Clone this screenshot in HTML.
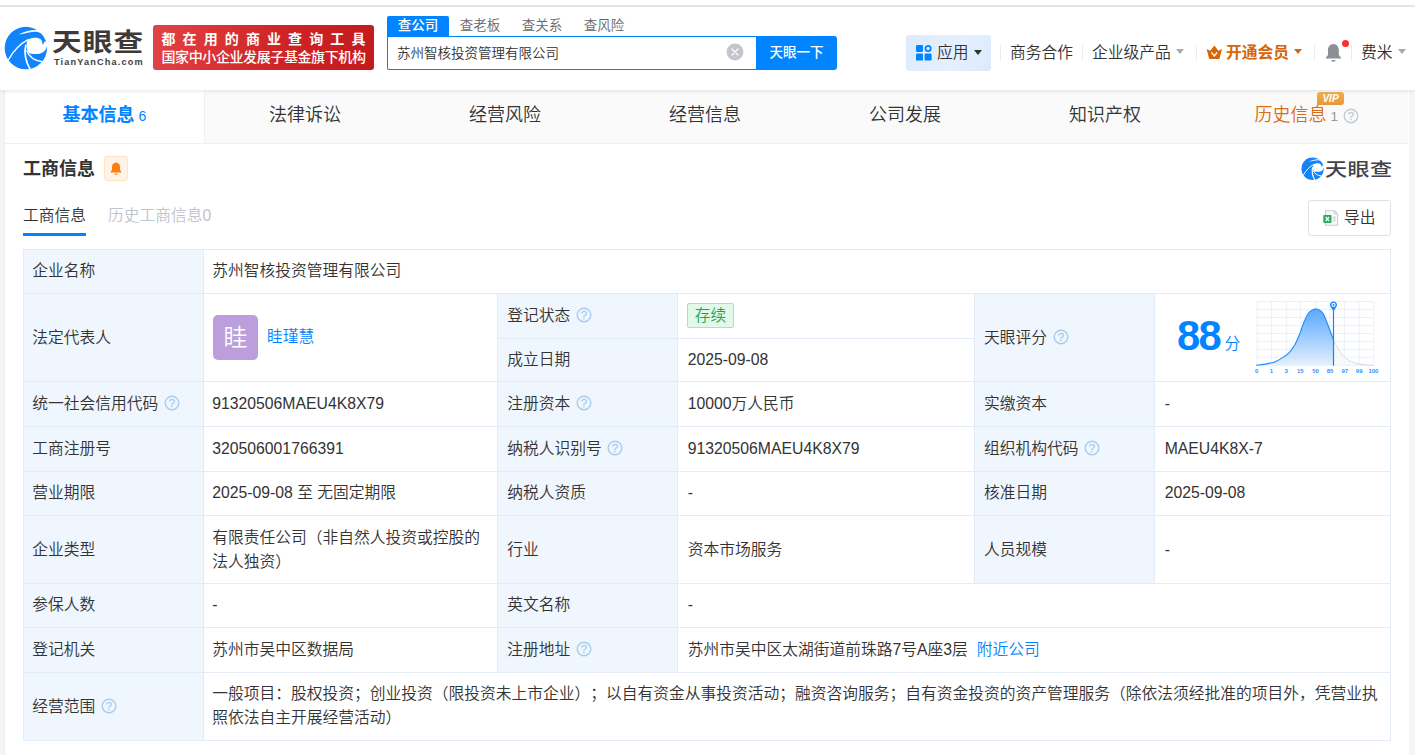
<!DOCTYPE html>
<html lang="zh-CN">
<head>
<meta charset="utf-8">
<title>苏州智核投资管理有限公司 - 天眼查</title>
<style>
*{box-sizing:border-box;margin:0;padding:0}
html,body{width:1415px;height:755px;overflow:hidden}
body{background:#f5f5f5;font-family:"Liberation Sans","Noto Sans CJK SC",sans-serif;color:#333;font-size:15.75px;position:relative;text-spacing-trim:space-all;font-weight:350}
.abs{position:absolute}
#topline{position:absolute;left:0;top:0;width:1415px;height:7px;background:#fff;border-bottom:2px solid #e9e9e9;height:7px}
#header{position:absolute;left:0;top:7px;width:1415px;height:83px;background:#fff;box-shadow:0 1px 4px rgba(0,0,0,.10);z-index:5}
#panel{position:absolute;left:5px;top:90px;width:1404px;height:665px;background:#fff;box-shadow:-1px 0 0 #eeeeee}
#tabs{position:absolute;left:0;top:0;width:1403px;height:54px;display:flex;background:#fafafa;border-bottom:1px solid #f0f0f0}
#tabs .tab{flex:none;width:200px;text-align:center;font-size:18px;line-height:50px;color:#333;white-space:nowrap}
#tabs .tab.on{background:#fff;color:#0084ff;font-weight:bold;border-right:1px solid #f0f0f0}
#tabs .tab .n{font-size:14px;font-weight:350;margin-left:4px}
.c{position:absolute;border:1px solid #e2ebf6;border-right:none;border-bottom:none;background:#fff;display:flex;align-items:center;padding:0 8px 0 8.3px;line-height:23.625px;font-size:15.75px;color:#333}
.c.l{background:#f0f6fd}
.c .t{width:100%}
.q{vertical-align:-2.2px;margin-left:5.5px}
.lk{color:#0084ff}
.av{display:inline-block;margin-left:0.8px;width:45px;height:45px;border-radius:5px;background:#bb9edb;color:#fff;font-size:24px;line-height:45px;text-align:center;vertical-align:middle}
.tag{display:inline-block;height:25px;line-height:23px;width:47px;text-align:center;padding:0;position:relative;top:-0.5px;margin-left:-0.8px;border:1px solid #a3e6b8;background:#e2f8e9;color:#1ea54c;font-size:15.75px;border-radius:2px}
#tb-border{position:absolute;left:23px;top:249px;width:1368px;height:492px;border:1px solid #e2ebf6;pointer-events:none}
</style>
</head>
<body>
<div id="topline"></div>
<div id="header">
  <!-- logo -->
  <svg class="abs" style="left:0;top:13px" width="55" height="55" viewBox="0 0 755 755">
    <circle cx="355" cy="385" r="291" fill="#1184fd"/>
    <path d="M380 268 C440 238 530 235 562 268 C582 290 583 318 586 342 L616 290 L665 310 L642 366 C628 432 565 492 400 455 C368 420 350 350 380 268 Z" fill="#fff"/>
    <path d="M254 203 C330 158 430 130 524 138 L560 160 L610 215 L622 250 L608 232 C585 190 540 165 500 162 C440 158 350 180 254 203 Z" fill="#fff"/>
    <path d="M386 270 C290 320 180 430 114 550" fill="none" stroke="#fff" stroke-width="19"/>
    <path d="M356 340 C328 450 358 580 414 678" fill="none" stroke="#fff" stroke-width="24"/>
    <path d="M366 420 C400 512 480 562 584 574" fill="none" stroke="#fff" stroke-width="20"/>
  </svg>
  <div class="abs" style="left:52.1px;top:19px;font-size:28.5px;line-height:36px;font-weight:700;color:#3e3a39;letter-spacing:1.02px;white-space:nowrap;transform-origin:0 0;transform:scale(1.04,0.882)">天眼查</div>
  <div class="abs" style="left:54px;top:49.3px;font-size:9.2px;line-height:12px;font-weight:bold;color:#45413f;letter-spacing:1.13px;white-space:nowrap">TianYanCha.com</div>
  <!-- banner -->
  <div class="abs" style="left:153px;top:18px;width:221px;height:45px;border-radius:3px;background:linear-gradient(100deg,#e24344 0%,#d02526 55%,#c51a1b 100%);color:#fff;font-weight:bold;white-space:nowrap">
    <div class="abs" style="left:8.5px;top:4px;font-size:14px;line-height:20px;letter-spacing:7.1px">都在用的商业查询工具</div>
    <div class="abs" style="left:8.5px;top:22px;font-size:14px;line-height:20px;letter-spacing:-0.4px;font-weight:500">国家中小企业发展子基金旗下机构</div>
  </div>
  <!-- search -->
  <div class="abs" style="left:387px;top:9px;width:62px;height:21px;background:#0084ff;color:#fff;font-size:13.5px;font-weight:500;line-height:19px;text-align:center;border-radius:2px 2px 0 0">查公司</div>
  <div class="abs" style="left:449px;top:9px;width:62px;height:20px;color:#666;font-size:13.5px;line-height:19px;text-align:center">查老板</div>
  <div class="abs" style="left:511px;top:9px;width:62px;height:20px;color:#666;font-size:13.5px;line-height:19px;text-align:center">查关系</div>
  <div class="abs" style="left:573px;top:9px;width:62px;height:20px;color:#666;font-size:13.5px;line-height:19px;text-align:center">查风险</div>
  <div class="abs" style="left:387px;top:29px;width:370px;height:34px;border:1px solid #0084ff;border-right:none;border-radius:2px 0 0 2px;background:#fff;font-size:13.5px;line-height:34px;padding-left:9px;color:#333">苏州智核投资管理有限公司</div>
  <svg class="abs" style="left:726px;top:36px" width="18" height="18" viewBox="0 0 18 18"><circle cx="9" cy="9" r="8.4" fill="#c4c6cc"/><path d="M6 6 L12 12 M12 6 L6 12" stroke="#fff" stroke-width="1.3" stroke-linecap="round"/></svg>
  <div class="abs" style="left:756px;top:29px;width:81px;height:34px;background:#0084ff;color:#fff;font-size:13.5px;font-weight:500;line-height:33px;text-align:center;border-radius:0 3px 3px 0">天眼一下</div>
  <!-- nav -->
  <div class="abs" style="left:906px;top:28px;width:85px;height:36px;border-radius:3px;background:linear-gradient(120deg,#deebfd,#e4f0fe 60%,#dbe9fc)"></div>
  <svg class="abs" style="left:916px;top:38px" width="16" height="16" viewBox="0 0 16 16"><rect x="0" y="0" width="7" height="7" rx="1.2" fill="#0084ff"/><rect x="0" y="8.6" width="7" height="7" rx="1.2" fill="#0084ff"/><rect x="8.6" y="8.6" width="7" height="7" rx="1.2" fill="#0084ff"/><circle cx="12.1" cy="3.5" r="2.6" fill="none" stroke="#0084ff" stroke-width="1.8"/></svg>
  <div class="abs" style="left:937px;top:34px;font-size:15.75px;line-height:24px;color:#333;white-space:nowrap">应用</div>
  <div class="abs tri" style="left:974px;top:43.3px;border:4px solid transparent;border-top:5px solid #333;border-bottom:none"></div>
  <div class="abs" style="left:1000px;top:38px;width:1px;height:15px;background:#ebebeb"></div>
  <div class="abs" style="left:1010px;top:34px;font-size:15.75px;line-height:24px;color:#333;white-space:nowrap">商务合作</div>
  <div class="abs" style="left:1082px;top:38px;width:1px;height:15px;background:#ebebeb"></div>
  <div class="abs" style="left:1092px;top:34px;font-size:15.75px;line-height:24px;color:#333;white-space:nowrap">企业级产品</div>
  <div class="abs tri" style="left:1176.4px;top:42.3px;border:4px solid transparent;border-top:5px solid #aaa;border-bottom:none"></div>
  <div class="abs" style="left:1196px;top:38px;width:1px;height:15px;background:#ebebeb"></div>
  <svg class="abs" style="left:1205.8px;top:38.2px" width="16.6" height="14.4" viewBox="0 0 18 16"><path d="M0.5 4.5 L4.5 6.5 L9 0.5 L13.5 6.5 L17.5 4.5 L15 14.5 Q14.8 15.5 13.8 15.5 L4.2 15.5 Q3.2 15.5 3 14.5 Z" fill="#d4660c"/><path d="M5.8 8.2 L9 12.2 L12.2 8.2" fill="none" stroke="#fff" stroke-width="1.6"/></svg>
  <div class="abs" style="left:1226px;top:34px;font-size:15.75px;line-height:24px;color:#d4660c;font-weight:bold;white-space:nowrap">开通会员</div>
  <div class="abs tri" style="left:1294.4px;top:42.3px;border:4px solid transparent;border-top:5px solid #d4660c;border-bottom:none"></div>
  <div class="abs" style="left:1314px;top:38px;width:1px;height:15px;background:#ebebeb"></div>
  <svg class="abs" style="left:1325.3px;top:36px" width="16.8" height="20" viewBox="0 0 18 20" preserveAspectRatio="none"><path d="M9 1 C5 1 3.2 4.2 3.2 7.5 L3.2 12 L1 14.6 L1 15.4 L17 15.4 L17 14.6 L14.8 12 L14.8 7.5 C14.8 4.2 13 1 9 1 Z" fill="#8c8f96"/><rect x="6.8" y="17" width="4.4" height="1.4" rx="0.7" fill="#8c8f96"/></svg>
  <div class="abs" style="left:1342px;top:33px;width:7px;height:7px;border-radius:50%;background:#ff2d2d"></div>
  <div class="abs" style="left:1351px;top:38px;width:1px;height:15px;background:#ebebeb"></div>
  <div class="abs" style="left:1361px;top:34px;font-size:15.75px;line-height:24px;color:#333;white-space:nowrap">费米</div>
  <div class="abs tri" style="left:1398px;top:41.8px;border:4px solid transparent;border-top:5px solid #aaa;border-bottom:none"></div>
</div>

<div id="panel">
  <div id="tabs">
    <div class="tab on">基本信息<span class="n">6</span></div>
    <div class="tab">法律诉讼</div>
    <div class="tab">经营风险</div>
    <div class="tab">经营信息</div>
    <div class="tab">公司发展</div>
    <div class="tab">知识产权</div>
    <div class="tab" style="color:#dd6b10;position:relative;padding-left:3px;text-align:left"><span style="margin-left:46.5px">历史信息</span><span class="n" style="color:#999;font-size:13.5px;margin-left:4px">1</span><svg style="vertical-align:-2.5px;margin-left:4.5px" viewBox="0 0 16 16" width="16" height="16"><circle cx="8" cy="8" r="6.8" fill="none" stroke="#c1cad6" stroke-width="1.4"/><text x="8" y="12" text-anchor="middle" font-size="11.5" font-family="Liberation Sans, sans-serif" fill="#c1cad6" stroke="#c1cad6" stroke-width="0.3">?</text></svg>
      <span class="abs" style="left:112px;top:2px;width:27px;height:13px;background:linear-gradient(180deg,#f0b050,#e8963a);border-radius:3px 3px 3px 0;color:#fff;font-size:10px;line-height:13px;font-weight:bold;font-style:italic;text-align:center">VIP</span>
      <span class="abs" style="left:112px;top:14px;width:0;height:0;border-left:3px solid #e8963a;border-bottom:3px solid transparent"></span>
    </div>
  </div>
</div>

<!-- section title (page coords) -->
<div class="abs" style="left:23px;top:156px;font-size:18px;line-height:26px;font-weight:bold;color:#333;white-space:nowrap">工商信息</div>
<div class="abs" style="left:104px;top:156px;width:24px;height:25px;border:1px solid #ffe3c4;background:#fff4e8;border-radius:3px"></div>
<svg class="abs" style="left:110px;top:161.5px" width="12" height="14" viewBox="0 0 12 14"><path d="M6 0.5 C3.3 0.5 2 2.8 2 5 L2 8 L0.6 9.8 L0.6 10.6 L11.4 10.6 L11.4 9.8 L10 8 L10 5 C10 2.8 8.7 0.5 6 0.5 Z" fill="#ff7d0a"/><rect x="4.6" y="11.6" width="2.8" height="1.2" rx="0.6" fill="#ff7d0a"/></svg>

<!-- watermark logo right -->
<svg class="abs" style="left:1298.70px;top:153.55px" width="28.93" height="28.93" viewBox="0 0 755 755">
    <circle cx="355" cy="385" r="291" fill="#1184fd"/>
    <path d="M380 268 C440 238 530 235 562 268 C582 290 583 318 586 342 L616 290 L665 310 L642 366 C628 432 565 492 400 455 C368 420 350 350 380 268 Z" fill="#fff"/>
    <path d="M254 203 C330 158 430 130 524 138 L560 160 L610 215 L622 250 L608 232 C585 190 540 165 500 162 C440 158 350 180 254 203 Z" fill="#fff"/>
    <path d="M386 270 C290 320 180 430 114 550" fill="none" stroke="#fff" stroke-width="24"/>
    <path d="M356 340 C328 450 358 580 414 678" fill="none" stroke="#fff" stroke-width="30"/>
    <path d="M366 420 C400 512 480 562 584 574" fill="none" stroke="#fff" stroke-width="26"/>
</svg>
<div class="abs" style="left:1324.7px;top:157.7px;font-size:20.5px;line-height:28px;font-weight:500;color:#434349;letter-spacing:0.3px;white-space:nowrap;transform-origin:0 0;transform:scale(1.08,0.866)">天眼查</div>

<!-- sub tabs -->
<div class="abs" style="left:23px;top:204px;font-size:15.75px;line-height:24px;color:#333;white-space:nowrap">工商信息</div>
<div class="abs" style="left:23px;top:233px;width:63px;height:3px;background:#0084ff"></div>
<div class="abs" style="left:108px;top:204px;font-size:15.75px;line-height:24px;color:#c0c4cc;white-space:nowrap">历史工商信息0</div>

<!-- export -->
<div class="abs" style="left:1308px;top:200px;width:83px;height:36px;border:1px solid #dde2ea;border-radius:3px;background:#fff"></div>
<svg class="abs" style="left:1322.5px;top:210px" width="16" height="16" viewBox="0 0 16 16"><path d="M2.600 0.800 L11.600 0.800 L14.600 3.800 L14.600 15.200 L2.600 15.200 Z" fill="#fafafb" stroke="#c9ccd4" stroke-width="1.1" stroke-linejoin="round"/><path d="M11.300 1 L11.300 4 L14.400 4" fill="none" stroke="#c9ccd4" stroke-width="0.9"/><path d="M10 7.200 H12.800 M10 9 H12.800 M10 10.800 H12.800" stroke="#c4c7cf" stroke-width="0.9"/><rect x="0.300" y="5" width="8.200" height="8" rx="0.8" fill="#27ae60"/><path d="M2.700 7 L6.100 11 M6.100 7 L2.700 11" stroke="#fff" stroke-width="1.2"/></svg>
<div class="abs" style="left:1344px;top:206px;font-size:15.75px;line-height:24px;color:#333;white-space:nowrap">导出</div>

<!-- table -->
<div class="c l" style="left:23px;top:249px;width:180px;height:44px;padding-bottom:2px;padding-left:8.3px;"><div class="t">企业名称</div></div>
<div class="c" style="left:203px;top:249px;width:1188px;height:44px;padding-bottom:2px;padding-left:8.3px;"><div class="t">苏州智核投资管理有限公司</div></div>
<div class="c l" style="left:23px;top:293px;width:180px;height:88px;padding-left:8.3px;"><div class="t">法定代表人</div></div>
<div class="c" style="left:203px;top:293px;width:294px;height:88px;padding-left:8.3px;"><div class="t"><span class="av">眭</span><span class="lk" style="margin-left:9px">眭瑾慧</span></div></div>
<div class="c l" style="left:497px;top:293px;width:180px;height:45px;padding-left:9.3px;"><div class="t">登记状态<svg class="q" viewBox="0 0 16 16" width="16" height="16"><circle cx="8" cy="8" r="6.8" fill="none" stroke="#a9cdef" stroke-width="1.4"/><text x="8" y="12" text-anchor="middle" font-size="11.5" font-family="Liberation Sans, sans-serif" fill="#a9cdef" stroke="#a9cdef" stroke-width="0.3">?</text></svg></div></div>
<div class="c" style="left:677px;top:293px;width:297px;height:45px;padding-left:9.8px;"><div class="t"><span class="tag">存续</span></div></div>
<div class="c l" style="left:497px;top:338px;width:180px;height:43px;padding-left:9.3px;"><div class="t">成立日期</div></div>
<div class="c" style="left:677px;top:338px;width:297px;height:43px;padding-left:9.8px;"><div class="t">2025-09-08</div></div>
<div class="c l" style="left:974px;top:293px;width:180px;height:88px;padding-left:9.1px;"><div class="t">天眼评分<svg class="q" viewBox="0 0 16 16" width="16" height="16"><circle cx="8" cy="8" r="6.8" fill="none" stroke="#a9cdef" stroke-width="1.4"/><text x="8" y="12" text-anchor="middle" font-size="11.5" font-family="Liberation Sans, sans-serif" fill="#a9cdef" stroke="#a9cdef" stroke-width="0.3">?</text></svg></div></div>
<div class="c" style="left:1154px;top:293px;width:237px;height:88px;padding-left:9.7px;"><div class="t"></div></div>
<div class="c l" style="left:23px;top:381px;width:180px;height:45px;padding-left:8.3px;"><div class="t">统一社会信用代码<svg class="q" viewBox="0 0 16 16" width="16" height="16"><circle cx="8" cy="8" r="6.8" fill="none" stroke="#a9cdef" stroke-width="1.4"/><text x="8" y="12" text-anchor="middle" font-size="11.5" font-family="Liberation Sans, sans-serif" fill="#a9cdef" stroke="#a9cdef" stroke-width="0.3">?</text></svg></div></div>
<div class="c" style="left:203px;top:381px;width:294px;height:45px;padding-left:8.3px;"><div class="t">91320506MAEU4K8X79</div></div>
<div class="c l" style="left:497px;top:381px;width:180px;height:45px;padding-left:9.3px;"><div class="t">注册资本<svg class="q" viewBox="0 0 16 16" width="16" height="16"><circle cx="8" cy="8" r="6.8" fill="none" stroke="#a9cdef" stroke-width="1.4"/><text x="8" y="12" text-anchor="middle" font-size="11.5" font-family="Liberation Sans, sans-serif" fill="#a9cdef" stroke="#a9cdef" stroke-width="0.3">?</text></svg></div></div>
<div class="c" style="left:677px;top:381px;width:297px;height:45px;padding-left:9.8px;"><div class="t">10000万人民币</div></div>
<div class="c l" style="left:974px;top:381px;width:180px;height:45px;padding-left:9.1px;"><div class="t">实缴资本</div></div>
<div class="c" style="left:1154px;top:381px;width:237px;height:45px;padding-left:9.7px;"><div class="t">-</div></div>
<div class="c l" style="left:23px;top:426px;width:180px;height:45px;padding-left:8.3px;"><div class="t">工商注册号</div></div>
<div class="c" style="left:203px;top:426px;width:294px;height:45px;padding-left:8.3px;"><div class="t">320506001766391</div></div>
<div class="c l" style="left:497px;top:426px;width:180px;height:45px;padding-left:9.3px;"><div class="t">纳税人识别号<svg class="q" viewBox="0 0 16 16" width="16" height="16"><circle cx="8" cy="8" r="6.8" fill="none" stroke="#a9cdef" stroke-width="1.4"/><text x="8" y="12" text-anchor="middle" font-size="11.5" font-family="Liberation Sans, sans-serif" fill="#a9cdef" stroke="#a9cdef" stroke-width="0.3">?</text></svg></div></div>
<div class="c" style="left:677px;top:426px;width:297px;height:45px;padding-left:9.8px;"><div class="t">91320506MAEU4K8X79</div></div>
<div class="c l" style="left:974px;top:426px;width:180px;height:45px;padding-left:9.1px;"><div class="t">组织机构代码<svg class="q" viewBox="0 0 16 16" width="16" height="16"><circle cx="8" cy="8" r="6.8" fill="none" stroke="#a9cdef" stroke-width="1.4"/><text x="8" y="12" text-anchor="middle" font-size="11.5" font-family="Liberation Sans, sans-serif" fill="#a9cdef" stroke="#a9cdef" stroke-width="0.3">?</text></svg></div></div>
<div class="c" style="left:1154px;top:426px;width:237px;height:45px;padding-left:9.7px;"><div class="t">MAEU4K8X-7</div></div>
<div class="c l" style="left:23px;top:471px;width:180px;height:44px;padding-bottom:2px;padding-left:8.3px;"><div class="t">营业期限</div></div>
<div class="c" style="left:203px;top:471px;width:294px;height:44px;padding-bottom:2px;padding-left:8.3px;"><div class="t">2025-09-08 至 无固定期限</div></div>
<div class="c l" style="left:497px;top:471px;width:180px;height:44px;padding-bottom:2px;padding-left:9.3px;"><div class="t">纳税人资质</div></div>
<div class="c" style="left:677px;top:471px;width:297px;height:44px;padding-bottom:2px;padding-left:9.8px;"><div class="t">-</div></div>
<div class="c l" style="left:974px;top:471px;width:180px;height:44px;padding-bottom:2px;padding-left:9.1px;"><div class="t">核准日期</div></div>
<div class="c" style="left:1154px;top:471px;width:237px;height:44px;padding-bottom:2px;padding-left:9.7px;"><div class="t">2025-09-08</div></div>
<div class="c l" style="left:23px;top:515px;width:180px;height:68px;padding-left:8.3px;"><div class="t">企业类型</div></div>
<div class="c" style="left:203px;top:515px;width:294px;height:68px;padding-left:8.3px;"><div class="t">有限责任公司（非自然人投资或控股的法人独资）</div></div>
<div class="c l" style="left:497px;top:515px;width:180px;height:68px;padding-left:9.3px;"><div class="t">行业</div></div>
<div class="c" style="left:677px;top:515px;width:297px;height:68px;padding-left:9.8px;"><div class="t">资本市场服务</div></div>
<div class="c l" style="left:974px;top:515px;width:180px;height:68px;padding-left:9.1px;"><div class="t">人员规模</div></div>
<div class="c" style="left:1154px;top:515px;width:237px;height:68px;padding-left:9.7px;"><div class="t">-</div></div>
<div class="c l" style="left:23px;top:583px;width:180px;height:44px;padding-bottom:2px;padding-left:8.3px;"><div class="t">参保人数</div></div>
<div class="c" style="left:203px;top:583px;width:294px;height:44px;padding-bottom:2px;padding-left:8.3px;"><div class="t">-</div></div>
<div class="c l" style="left:497px;top:583px;width:180px;height:44px;padding-bottom:2px;padding-left:9.3px;"><div class="t">英文名称</div></div>
<div class="c" style="left:677px;top:583px;width:714px;height:44px;padding-bottom:2px;padding-left:9.8px;"><div class="t">-</div></div>
<div class="c l" style="left:23px;top:627px;width:180px;height:45px;padding-left:8.3px;"><div class="t">登记机关</div></div>
<div class="c" style="left:203px;top:627px;width:294px;height:45px;padding-left:8.3px;"><div class="t">苏州市吴中区数据局</div></div>
<div class="c l" style="left:497px;top:627px;width:180px;height:45px;padding-left:9.3px;"><div class="t">注册地址<svg class="q" viewBox="0 0 16 16" width="16" height="16"><circle cx="8" cy="8" r="6.8" fill="none" stroke="#a9cdef" stroke-width="1.4"/><text x="8" y="12" text-anchor="middle" font-size="11.5" font-family="Liberation Sans, sans-serif" fill="#a9cdef" stroke="#a9cdef" stroke-width="0.3">?</text></svg></div></div>
<div class="c" style="left:677px;top:627px;width:714px;height:45px;padding-left:9.8px;"><div class="t">苏州市吴中区太湖街道前珠路7号A座3层<span class="lk" style="margin-left:9px">附近公司</span></div></div>
<div class="c l" style="left:23px;top:672px;width:180px;height:69px;padding-left:8.3px;"><div class="t">经营范围<svg class="q" viewBox="0 0 16 16" width="16" height="16"><circle cx="8" cy="8" r="6.8" fill="none" stroke="#a9cdef" stroke-width="1.4"/><text x="8" y="12" text-anchor="middle" font-size="11.5" font-family="Liberation Sans, sans-serif" fill="#a9cdef" stroke="#a9cdef" stroke-width="0.3">?</text></svg></div></div>
<div class="c" style="left:203px;top:672px;width:1188px;height:69px;padding-bottom:2px;padding-left:8.3px;"><div class="t">一般项目：股权投资；创业投资（限投资未上市企业）；以自有资金从事投资活动；融资咨询服务；自有资金投资的资产管理服务（除依法须经批准的项目外，凭营业执照依法自主开展经营活动）</div></div>
<div id="tb-border"></div>
<span style="position:absolute;left:1177px;top:310.5px;font-size:41.7px;line-height:50px;font-weight:bold;color:#0084ff;letter-spacing:-1.6px;white-space:nowrap">88</span>
<span style="position:absolute;left:1224.500px;top:332px;font-size:15.75px;line-height:24px;color:#0084ff">分</span>
<svg style="position:absolute;left:1250px;top:295px" width="140" height="85" viewBox="0 0 140 85">
<defs><linearGradient id="g1" x1="0" y1="0" x2="0" y2="1"><stop offset="0" stop-color="#4da3ff"/><stop offset="0.45" stop-color="#8ec4ff"/><stop offset="1" stop-color="#e3effc"/></linearGradient></defs>
<path d="M6.98 6.53V70.34M21.38 6.53V70.34M36.35 6.53V70.34M50.64 6.53V70.34M65.61 6.53V70.34M79.90 6.53V70.34M94.31 6.53V70.34M109.16 6.53V70.34M123.79 6.53V70.34M6.98 6.53H123.79M6.98 14.40H123.79M6.98 22.51H123.79M6.98 30.38H123.79M6.98 38.49H123.79M6.98 46.37H123.79M6.98 54.36H123.79M6.98 62.23H123.79M6.98 70.34H123.79" stroke="#e9f1fb" stroke-width="1" fill="none"/>
<path d="M83.50 45.01 C84.40 46.70 86.88 52.14 88.90 55.14 C90.93 58.14 93.22 60.96 95.66 63.02 C98.09 65.08 100.72 66.43 103.53 67.52 C106.35 68.61 109.16 69.08 112.54 69.55 C115.91 70.02 121.91 70.20 123.79 70.34 L83.50 70.34 Z" fill="#f4f6f9" fill-opacity="0.7"/>
<path d="M6.19 70.34 C7.97 70.09 13.60 69.53 16.88 68.87 C20.16 68.22 23.07 67.56 25.88 66.40 C28.70 65.23 31.51 63.40 33.76 61.90 C36.01 60.39 37.51 59.46 39.39 57.39 C41.26 55.33 43.33 52.52 45.01 49.52 C46.70 46.52 48.02 43.14 49.52 39.39 C51.02 35.64 52.52 30.57 54.02 27.01 C55.52 23.45 57.02 20.07 58.52 18.01 C60.02 15.94 61.84 15.29 63.02 14.63 C64.20 13.97 64.67 14.07 65.61 14.07 C66.55 14.07 67.39 13.88 68.65 14.63 C69.90 15.38 71.65 16.13 73.15 18.57 C74.65 21.01 75.92 24.85 77.65 29.26 C79.38 33.67 82.53 42.39 83.50 45.01 L83.50 70.34 L6.19 70.34 Z" fill="url(#g1)" fill-opacity="0.93"/>
<path d="M83.50 45.01 C84.40 46.70 86.88 52.14 88.90 55.14 C90.93 58.14 93.22 60.96 95.66 63.02 C98.09 65.08 100.72 66.43 103.53 67.52 C106.35 68.61 109.16 69.08 112.54 69.55 C115.91 70.02 121.91 70.20 123.79 70.34" fill="none" stroke="#c9d6e4" stroke-width="0.9"/>
<path d="M6.19 70.34 C7.97 70.09 13.60 69.53 16.88 68.87 C20.16 68.22 23.07 67.56 25.88 66.40 C28.70 65.23 31.51 63.40 33.76 61.90 C36.01 60.39 37.51 59.46 39.39 57.39 C41.26 55.33 43.33 52.52 45.01 49.52 C46.70 46.52 48.02 43.14 49.52 39.39 C51.02 35.64 52.52 30.57 54.02 27.01 C55.52 23.45 57.02 20.07 58.52 18.01 C60.02 15.94 61.84 15.29 63.02 14.63 C64.20 13.97 64.67 14.07 65.61 14.07 C66.55 14.07 67.39 13.88 68.65 14.63 C69.90 15.38 71.65 16.13 73.15 18.57 C74.65 21.01 75.92 24.85 77.65 29.26 C79.38 33.67 82.53 42.39 83.50 45.01" fill="none" stroke="#1c8bff" stroke-width="1.1"/>
<path d="M83.50 13.50 V70.67" stroke="#1184fd" stroke-width="1.2"/>
<path d="M83.50 15.98 L80.58 11.70 A3.4 3.4 0 1 1 86.43 11.70 Z" fill="#1184fd"/>
<circle cx="83.50" cy="9.90" r="2.1" fill="#fff"/>
<circle cx="83.50" cy="9.90" r="1.0" fill="#1184fd"/>
<g font-family="Liberation Sans, sans-serif" font-size="6" font-weight="bold" fill="#2f93ff" text-anchor="middle"><text x="6.75" y="78.2">0</text><text x="21.38" y="78.2">1</text><text x="36.24" y="78.2">3</text><text x="50.30" y="78.2">15</text><text x="65.61" y="78.2">50</text><text x="80.13" y="78.2">85</text><text x="94.76" y="78.2">97</text><text x="109.16" y="78.2">99</text><text x="123.45" y="78.2">100</text></g>
</svg>
</body>
</html>
